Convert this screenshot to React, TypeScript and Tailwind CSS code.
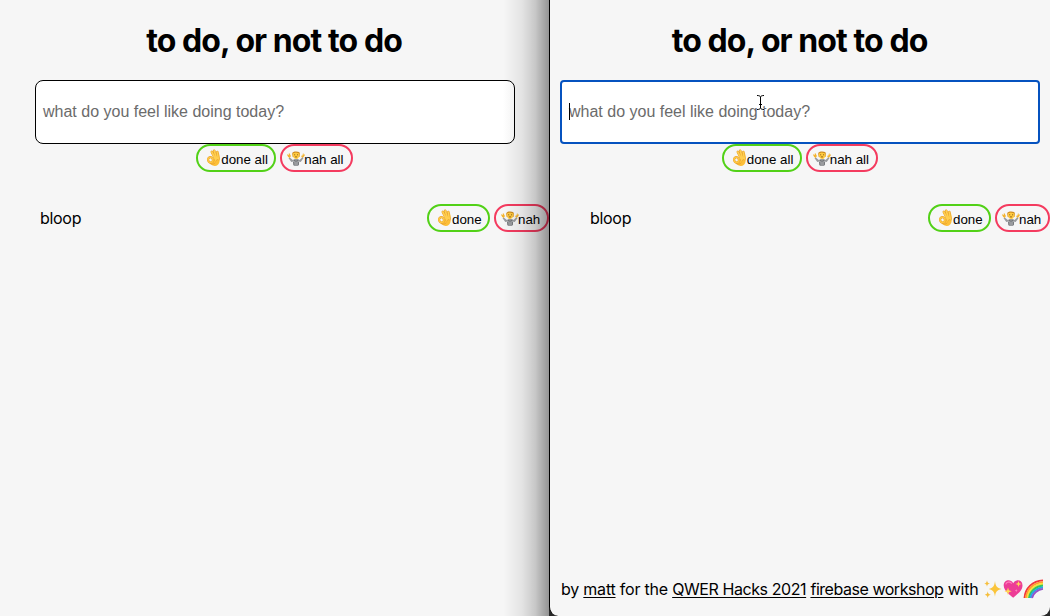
import React from "react";

function OkHand() {
  return (
    <svg viewBox="0 0 16 18" className="-mr-px -ml-px h-[18px] w-[17px] shrink-0">
      <path d="M11.9 4.2c.1-1 1.4-1 1.6 0 .9 3.4 1.2 6.8.3 9.4-.8 2.3-2.6 3.7-4.7 3.4-2.4-.3-5.3-2.2-6.4-4 .9.3 2 0 3-.7l2.8-2.5Z" fill="#fdbf39" />
      <path d="m10.3 11-4-8.1M11.2 9.8 8.7 1.7M12.8 10 11.8 3" stroke="#e39a2a" strokeWidth="2.5" strokeLinecap="round" />
      <path d="m10.3 11-4-8.1M11.2 9.8 8.7 1.7M12.8 10 11.8 3" stroke="#ffcf4f" strokeWidth="1.7" strokeLinecap="round" />
      <ellipse cx="5" cy="10.9" rx="2.4" ry="2.7" transform="rotate(-20 5 10.9)" fill="#f6f6f6" stroke="#e29a2c" strokeWidth="2.2" />
      <ellipse cx="5" cy="10.9" rx="2.4" ry="2.7" transform="rotate(-20 5 10.9)" fill="none" stroke="#ffc842" strokeWidth="1.5" />
      <path d="M4.5 14.4c2.4 1.4 4.2.8 5.2-.7" fill="none" stroke="#df962d" strokeWidth=".6" />
    </svg>
  );
}

function Shrug() {
  return (
    <svg viewBox="0 0 18 17" className="-mr-px h-[17px] w-[18px] shrink-0">
      <path d="m2.5 7.2 3.3 2.9 1.9-1h3l1.8.9 3.1-3 1 1-2.9 4.1-2.1-.7-.2 4.6H6.7l-.3-4.4-2.1.5-2.7-3.8Z" fill="#9a9c9f" />
      <path d="M7 10.2 9 11.3l2.3-1.1M6.5 12l.4 3M11.6 12l-.2 3" fill="none" stroke="#6c6f73" strokeWidth=".9" />
      <path d="M2.8 8 1.2 6.9 0 4.7l.9-.4 1.2 1-.4-1.9.8-.1 1.4 2.6ZM15 7.7l-.8-1.5.5-.8.8.2.4-2.2.8.1v1.6l.9-.8.4.6-1.4 2.1Z" fill="#f3b431" />
      <path d="M5.2 3.7c.2-2 1.8-2.3 4-2.3 2.4 0 3.8.7 3.7 2.5l-.4 3.2H5.7Z" fill="#cf8c20" />
      <path d="M5.8 3.5 8.7 2.6l3.7.8c.2 3.4-1 5.6-3.3 5.6S5.6 6.8 5.8 3.5Z" fill="#ffca3f" />
      <path d="M7.1 4.8h1.1M10 4.8h1.1M7.9 6.9h2.2" stroke="#8c5e1b" strokeWidth=".9" />
    </svg>
  );
}

function Sparkles() {
  return (
    <svg viewBox="0 0 20 20" className="h-5 w-5 shrink-0">
      <path d="M12 2c.6 5 1.6 6.9 6.7 8.1-5.1 1.1-6.1 2.8-6.7 7.7-.7-4.9-1.7-6.6-6.3-7.7C10.3 8.9 11.3 7 12 2Z" fill="#fac43b" />
      <path d="M4 1.2c.3 2.2.8 2.8 3 3.3-2.2.5-2.7 1.2-3 3.3-.3-2.1-.8-2.8-2.8-3.3 2-.5 2.5-1.1 2.8-3.3ZM4.7 12.3c.4 2.3 1 3 3 3.4-2 .5-2.6 1.1-3 3.2-.4-2.1-1-2.7-3-3.2 2-.4 2.6-1.1 3-3.4Z" fill="#f5be3c" />
    </svg>
  );
}

function SparklingHeart() {
  return (
    <svg viewBox="0 0 20 20" className="h-5 w-5 shrink-0">
      <path d="M10.2 18.8C7.3 15.9 1 12.5.7 6.5.7 1 7.5-.6 10.2 4.2 13-.3 19.4.7 19.5 6.2c0 6-5.8 9.1-9.3 12.6Z" fill="#ed3d96" />
      <path d="M2.7 5.4C3.6 2.7 6.7 2.1 8.8 4.6" fill="none" stroke="#ff7abc" strokeWidth="1.3" />
      <path d="m5 8.5.9 2.8 2.8 1-2.8.9L5 16l-.9-2.8-2.7-.9 2.7-1ZM15.5 2l.8 2.2 2.3.8-2.3.8-.8 2.3-.8-2.3-2.2-.8 2.2-.8Z" fill="#ffd956" />
      <path d="m13.2 10 .4 1.2 1.2.4-1.2.4-.4 1.2-.4-1.2-1.2-.4 1.2-.4Z" fill="#ff8ac4" />
    </svg>
  );
}

function Rainbow() {
  return (
    <svg viewBox="0 0 21 20" className="h-5 w-[21px] shrink-0" fill="none" strokeWidth="1.9">
      <path d="M1.5 19C2.2 9 9.6 2 20 1.4" stroke="#f2363d" />
      <path d="M3 19C3.8 10.2 10.6 3.8 20 3.1" stroke="#ff9d2e" />
      <path d="M4.5 19C5.2 11.3 11.6 5.4 20 4.8" stroke="#f9df3f" />
      <path d="M6 19C6.8 12.4 12.7 7.1 20 6.5" stroke="#35c85a" />
      <path d="M7.5 19C8.3 13.5 13.7 8.8 20 8.2" stroke="#28a6e6" />
      <path d="M9 19C9.8 14.6 14.7 10.5 20 9.9" stroke="#9551c8" />
    </svg>
  );
}

function ActionButtons({ all = false }: { all?: boolean }) {
  const base = "flex h-7 shrink-0 items-center rounded-[14px] border-2 font-['Liberation_Sans',Arial,sans-serif] text-[13.333px] leading-none whitespace-nowrap text-black";
  return (
    <div className="flex shrink-0 gap-1">
      <button className={`${base} border-[#52d117] pl-2 ${all ? "w-20" : "w-[63px]"}`}>
        <OkHand /><span className="translate-y-[2px]">{all ? "done all" : "done"}</span>
      </button>
      <button className={`${base} border-[#f43b5f] pl-[5px] ${all ? "w-[72.5px]" : "w-[55px]"}`}>
        <Shrug /><span className="translate-y-[2px]">{all ? "nah all" : "nah"}</span>
      </button>
    </div>
  );
}

function Title() {
  return <h1 className="flex h-20 items-center justify-center pt-px pr-px text-[32px] font-bold leading-none tracking-[-0.92px] whitespace-nowrap text-black">to do, or not to do</h1>;
}

export default function App() {
  return (
    <main className="flex h-[616px] w-[1050px] overflow-hidden bg-[#292929] font-['Inter',sans-serif] text-black">
      <section className="relative w-[549px] shrink-0 overflow-hidden bg-[#f6f6f6]">
        <Title />
        <div className="mx-auto flex h-16 w-[480px] items-center rounded-[8px] border border-black bg-white pl-[7.5px] font-['Liberation_Sans',Arial,sans-serif] text-base text-[#6b6b6b]">
          what do you feel like doing today?
        </div>
        <div className="flex justify-center"><ActionButtons all /></div>
        <div className="mt-8 flex h-7 items-center justify-between pl-10"><span className="tracking-[-0.3px]">bloop</span><ActionButtons /></div>
        <div className="pointer-events-none absolute inset-y-0 right-0 w-[46px] bg-[linear-gradient(to_right,transparent,rgba(0,0,0,0.08)_42%,rgba(0,0,0,0.19)_70%,rgba(0,0,0,0.4))]" />
      </section>
      <section className="flex w-[501px] shrink-0 flex-col overflow-hidden rounded-b-[9px] border-l border-black bg-[#f6f6f6]">
        <Title />
        <div className="relative mx-auto flex h-16 w-[480px] shrink-0 items-center rounded-[4px] border-2 border-[#0552bf] bg-white pl-[7px] font-['Liberation_Sans',Arial,sans-serif] text-base text-[#6b6b6b]">
          what do you feel like doing today?
          <span className="absolute left-[7px] top-[21px] h-[17px] w-px bg-black" />
          <svg viewBox="0 0 9 17" className="absolute left-[194px] top-[12px] h-[17px] w-[9px]" fill="none">
            <path d="M1 1.5c2 0 3 .4 3.5 1.4C5 1.9 6 1.5 8 1.5M4.5 3v11M1 15.5c2 0 3-.4 3.5-1.4.5 1 1.5 1.4 3.5 1.4M3 10.5h3" stroke="white" strokeWidth="2.5" />
            <path d="M1 1.5c2 0 3 .4 3.5 1.4C5 1.9 6 1.5 8 1.5M4.5 3v11M1 15.5c2 0 3-.4 3.5-1.4.5 1 1.5 1.4 3.5 1.4M3 10.5h3" stroke="black" strokeWidth="1" />
          </svg>
        </div>
        <div className="flex justify-center"><ActionButtons all /></div>
        <div className="mt-8 flex h-7 items-center justify-between pl-10"><span className="tracking-[-0.3px]">bloop</span><ActionButtons /></div>
        <footer className="mt-auto mb-[15px] flex h-6 items-center pl-[11px] text-base tracking-[-0.22px] whitespace-nowrap">
          <span>by <a className="underline underline-offset-2">matt</a> for the <a className="tracking-[-0.42px] underline underline-offset-2">QWER Hacks 2021</a> <a className="tracking-[-0.46px] underline underline-offset-2">firebase workshop</a> with&nbsp;</span>
          <Sparkles /><SparklingHeart /><Rainbow />
        </footer>
      </section>
    </main>
  );
}
